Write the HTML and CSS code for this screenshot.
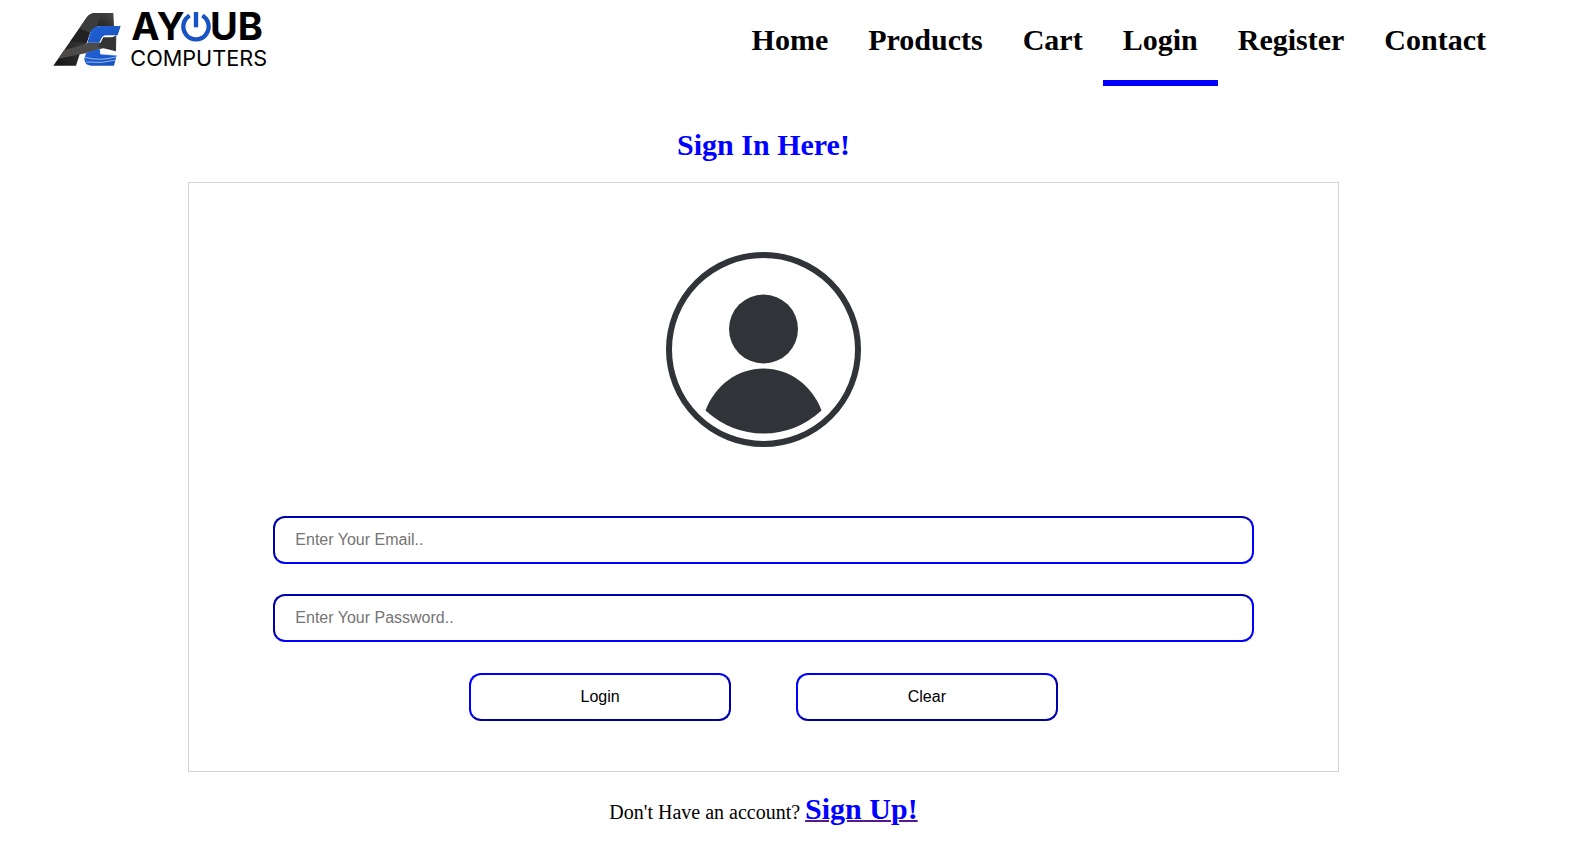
FILE: index.html
```
<!DOCTYPE html>
<html lang="en">
<head>
<meta charset="utf-8">
<meta name="viewport" content="width=device-width, initial-scale=1">
<title>Ayoub Computers - Login</title>
<link rel="stylesheet" href="styles.css">
</head>
<body>
<header class="header">
  <a class="brand" href="#" aria-label="Ayoub Computers">
    <svg class="logo" viewBox="0 0 720 240">
      <defs>
        <linearGradient id="steel" x1="0" y1="1" x2="1" y2="0">
          <stop offset="0" stop-color="#151515"/>
          <stop offset=".45" stop-color="#343434"/>
          <stop offset=".7" stop-color="#1d1d1d"/>
          <stop offset="1" stop-color="#4a4a4a"/>
        </linearGradient>
        <linearGradient id="blue" x1="0" y1="0" x2="1" y2="1">
          <stop offset="0" stop-color="#2464dc"/>
          <stop offset="1" stop-color="#1450b8"/>
        </linearGradient>
      </defs>
      <path fill="url(#steel)" d="M40 197 139 54Q149 39 167 39H220L222 78H181Q156 80 149 100L140 128 124 147 108 197Z"/>
      <path fill="#3c3c3c" d="M118 86 139 54Q149 39 167 39H186L170 82 150 98Z"/>
      <path fill="#222" d="M118 86 150 98 140 128 90 126Z"/>
      <path fill="#4d4b49" d="M72 151 145 128H190L229 105 228 154 200 142 136 160 55 176Z"/>
      <path fill="#333" d="M190 112H226L228 154 175 141Z"/>
      <path fill="url(#blue)" d="M142 128 151 98Q158 78 183 78H242L233 106H199Q187 107 183 117L178 128Z"/>
      <path fill="url(#blue)" d="M139 158 179 146 181 162 230 166 222 197H153Q133 196 133 175Z"/>
      <path fill="none" stroke="#dce8ff" stroke-width="2" d="M134 172Q180 184 228 171M139 186Q184 191 225 181M181 162 229 166"/>
      <text class="logo-name" x="274" y="120">AY</text>
      <text class="logo-name" x="510" y="120">UB</text>
      <path class="logo-power" d="M449 47A38 38 0 1 0 487 47"/>
      <path class="logo-power" d="M468 36V82"/>
      <text class="logo-sub" x="271" y="197">COMPUTERS</text>
    </svg>
  </a>
  <nav class="nav">
    <a href="#">Home</a>
    <a href="#">Products</a>
    <a href="#">Cart</a>
    <a class="active" href="#" aria-current="page">Login</a>
    <a href="#">Register</a>
    <a href="#">Contact</a>
  </nav>
</header>
<main class="main">
  <h1 class="title">Sign In Here!</h1>
  <form class="card">
    <svg class="avatar" viewBox="0 0 195 195" aria-hidden="true">
      <circle cx="97.5" cy="97.5" r="94.5" fill="none" stroke="#303338" stroke-width="6"/>
      <circle cx="97.5" cy="77" r="34.5" fill="#303338"/>
      <path fill="#303338" d="M39.500 158.500C49 133 72 116.500 97.500 116.500S146 133 155.500 158.500Q130 181.500 97.500 181.500T39.500 158.500Z"/>
    </svg>
    <input class="field" type="email" placeholder="Enter Your Email.." aria-label="Email">
    <input class="field" type="password" placeholder="Enter Your Password.." aria-label="Password">
    <div class="actions">
      <button class="button" type="submit">Login</button>
      <button class="button" type="reset">Clear</button>
    </div>
  </form>
  <p class="signup">Don't Have an account? <a href="#"><span>Sign Up!</span></a></p>
</main>
</body>
</html>
```
FILE: styles.css
```
* {
  box-sizing: border-box;
}

body {
  margin: 0;
  background: #fff;
  color: #000;
  font-family: "Liberation Serif", "Times New Roman", serif;
}

.header {
  display: flex;
  justify-content: space-between;
  align-items: flex-start;
  padding: 0 83px 0 40px;
}

.brand,
.logo {
  display: block;
}

.logo {
  width: 240px;
  height: 80px;
}

.logo-name {
  font: 700 114px Inter, sans-serif;
}

.logo-sub {
  font: 400 65px Inter, sans-serif;
}

.logo-power {
  fill: none;
  stroke: #1853c4;
  stroke-width: 13;
}

.nav {
  display: flex;
}

.nav a {
  padding: 0 20px;
  border-bottom: 6px solid transparent;
  color: #000;
  font-size: 30px;
  font-weight: 700;
  line-height: 80px;
  text-decoration: none;
}

.nav .active {
  border-color: #00f;
}

.main {
  display: flex;
  flex-direction: column;
  align-items: center;
  gap: 20px;
  padding: 42px 62px 20px 0;
}

.title {
  margin: 0;
  color: #00f;
  font-size: 30px;
  line-height: 34px;
}

.card {
  display: flex;
  flex-direction: column;
  align-items: center;
  gap: 30px;
  width: 75.4%;
  padding: 69px 0 50px;
  border: 1px solid #d3d3d3;
}

.avatar {
  width: 195px;
  height: 195px;
  margin-bottom: 39px;
}

.field,
.button {
  height: 48px;
  border-width: 2px;
  border-color: #00f;
  border-radius: 12px;
  background: #fff;
  color: #000;
  font: 16px "Liberation Sans", Arial, sans-serif;
}

.field {
  width: 85.3%;
  padding: 0 20px;
  border-style: inset;
}

.field::placeholder {
  color: #757575;
}

.actions {
  display: flex;
  justify-content: center;
  gap: 65px;
  width: 85.3%;
  padding-top: 1px;
}

.button {
  width: 26.7%;
  padding: 0;
  border-style: outset;
}

.signup {
  margin: 0;
  font-size: 20px;
  line-height: 34px;
}

.signup a {
  color: #551a8b;
}

.signup span {
  color: #00f;
  font-size: 30px;
  font-weight: 700;
}
```
